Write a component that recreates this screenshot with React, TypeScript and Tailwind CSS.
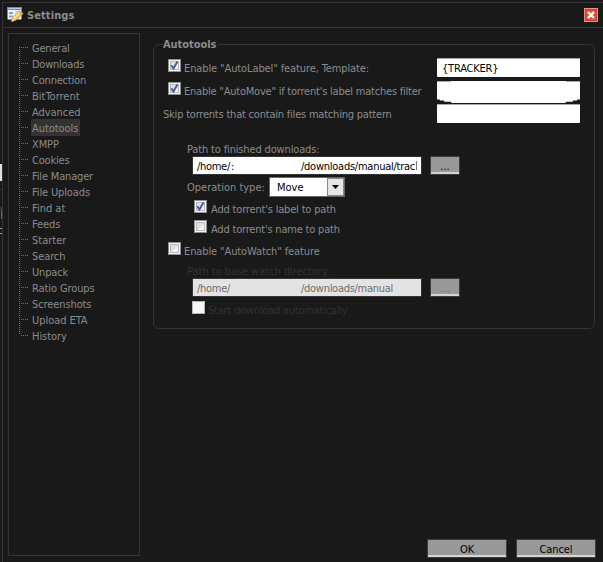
import type { ReactNode } from "react";

const SECTIONS: [string, string][] = [
  ["General", "tracking-[-0.2px]"],
  ["Downloads", "tracking-[-0.25px]"],
  ["Connection", "tracking-[-0.2px]"],
  ["BitTorrent", ""],
  ["Advanced", "tracking-[-0.05px]"],
  ["Autotools", "tracking-[-0.05px]"],
  ["XMPP", "tracking-[-0.1px]"],
  ["Cookies", "tracking-[-0.2px]"],
  ["File Manager", "tracking-[-0.17px]"],
  ["File Uploads", "tracking-[-0.13px]"],
  ["Find at", ""],
  ["Feeds", "tracking-[-0.1px]"],
  ["Starter", ""],
  ["Search", "tracking-[-0.1px]"],
  ["Unpack", "tracking-[-0.15px]"],
  ["Ratio Groups", "tracking-[-0.1px]"],
  ["Screenshots", "tracking-[-0.1px]"],
  ["Upload ETA", "tracking-[-0.05px]"],
  ["History", "tracking-[-0.05px]"],
];

function SettingsIcon() {
  return (
    <svg width="17" height="16" viewBox="0 0 17 16">
      <rect x="0.5" y="0.5" width="14" height="12" rx="1" fill="#eef4fc" stroke="#5b87cf" />
      <rect x="0" y="0" width="15" height="3" fill="#5c8fe0" />
      <rect x="1" y="1" width="13" height="1" fill="#a9c8f5" />
      <path d="M2 5h4v2H2zM2 8.5h4v2H2z" fill="#7f9fce" />
      <path d="M8 5h5M8 7h4M8 9h2" stroke="#a8bddf" />
      <path d="M4.5 14.5l1-3.5L12 4.6l3.3 2.8L8.5 13.5z" fill="#f3c64d" stroke="#b98425" strokeWidth=".7" />
      <path d="M6.5 11.5l6-5.7" stroke="#fff0a8" strokeWidth="1.2" />
      <path d="M12 4.6l1.3-1 3.2 2.8-1.2 1z" fill="#e89a5e" />
      <path d="M4.5 14.5l.8-2.6 2.4 1.7z" fill="#f7e2b4" />
    </svg>
  );
}

function CloseIcon() {
  return (
    <svg width="14" height="14" viewBox="0 0 14 14">
      <rect x="0.5" y="0.5" width="13" height="13" fill="#dc503e" stroke="#ef8d7c" />
      <rect x="1.5" y="1.5" width="11" height="11" fill="none" stroke="#c93c2e" />
      <path d="M4 4l6 6M10 4l-6 6" stroke="#fff" strokeWidth="2.3" />
    </svg>
  );
}

function Check({ on = false, disabled = false }: { on?: boolean; disabled?: boolean }) {
  return (
    <svg className="block shrink-0" width="13" height="13" viewBox="0 0 13 13">
      <rect x="0.5" y="0.5" width="12" height="12" fill="#f6f6f6" stroke={disabled ? "#b4b4b4" : "#8f8f8f"} />
      {!disabled && <rect x="2.5" y="2.5" width="8" height="8" fill="#dfe0e3" stroke="#b5b9be" />}
      {!disabled && <path d="M4 10l6-6v6z" fill="#f3f3f4" />}
      {on && <path d="M3.2 6.2l2.3 3.3 4-7" fill="none" stroke="#475a9c" strokeWidth="1.9" />}
    </svg>
  );
}

function Button({ children, className }: { children: ReactNode; className: string }) {
  return (
    <button
      className={`box-border flex h-[19px] shrink-0 items-center justify-center border border-[#3c3c3c] bg-[#999] pt-[2px] shadow-[inset_0_-2px_0_#d4d4d4] ${className}`}
    >
      {children}
    </button>
  );
}

function Field({ children, className = "" }: { children?: ReactNode; className?: string }) {
  return (
    <div className={`flex w-[143px] items-center rounded-[1px] border-t border-[#aaa] bg-white pl-[5px] text-black ${className}`}>
      {children}
    </div>
  );
}

export default function App() {
  return (
    <div className="relative flex h-[562px] w-[603px] overflow-hidden bg-[#191919] font-['DejaVu_Sans_Condensed','DejaVu_Sans',sans-serif] text-[11px] leading-[16px] whitespace-nowrap text-[#8c8c8c] [font-stretch:condensed]">
      <div className="flex w-[2px] shrink-0 flex-col pt-[164px]">
        <div className="h-[17px] bg-[#e0e0e0]" />
        <div className="mt-[8px] h-px bg-[#333]" />
        <div className="mt-[17px] h-[3px] bg-[#333]" />
        <div className="h-[9px] w-px self-end bg-[#666]" />
        <div className="mt-[9px] h-px bg-[#999]" />
        <div className="mt-[4px] h-px bg-[#999]" />
      </div>
      <div className="mt-[2px] flex min-w-0 flex-1 flex-col border-t border-l border-[#343434]">
        <header className="flex h-[25px] shrink-0 items-center border-b border-[#343434] pr-[5px] pl-[4px]">
          <SettingsIcon />
          <h1 className="ml-[3px] flex-1 pt-[2px] font-bold tracking-[0.1px]">Settings</h1>
          <CloseIcon />
        </header>
        <div className="flex flex-1">
          <nav className="mt-[5px] ml-[5px] h-[523px] w-[132px] shrink-0 border border-[#343434] pt-[5px] pl-[10px]">
            {SECTIONS.map(([name, tracking], i) => (
              <div key={name} className="flex h-[16px] items-start">
                <div
                  className={`flex w-px shrink-0 self-stretch bg-[repeating-linear-gradient(to_bottom,#777_0_1px,transparent_1px_2px)] ${
                    i === 0 ? "mt-[8px]" : i === SECTIONS.length - 1 ? "mb-[8px]" : ""
                  }`}
                />
                <div className="mt-[8px] ml-px h-px w-[8px] shrink-0 bg-[repeating-linear-gradient(to_right,#777_0_1px,transparent_1px_2px)]" />
                <span className={`ml-[2px] h-[17px] pt-[2px] pr-[2px] pl-px leading-[15px] ${tracking} ${name === "Autotools" ? "bg-[#333]" : ""}`}>
                  {name}
                </span>
              </div>
            ))}
          </nav>
          <div className="ml-[13px] flex w-[443px] flex-col pt-[8px]">
            <fieldset className="h-[293px] w-[442px] rounded-[6px] border border-[#343434] pl-[9px]">
              <legend className="h-[16px] pt-px font-bold">
                <span className="pr-[2px] tracking-[-0.05px]">Autotools</span>
              </legend>
              <div className="flex flex-col">
                <div className="mt-[6px] flex h-[19px]">
                  <div className="flex w-[274px] gap-[3px] pt-px pl-[5px]">
                    <Check on />
                    <span className="pt-[2px] tracking-[-0.11px]">Enable "AutoLabel" feature, Template:</span>
                  </div>
                  <Field className="pt-px tracking-[-0.2px]">{"{TRACKER}"}</Field>
                </div>
                <div className="mt-[4px] flex h-[22px]">
                  <div className="flex w-[274px] gap-[3px] pt-px pl-[5px]">
                    <Check on />
                    <span className="pt-[2px] tracking-[-0.22px]">Enable "AutoMove" if torrent's label matches filter</span>
                  </div>
                  <Field className="justify-between border-t-0 !items-start !pl-0 [clip-path:polygon(0_0,100%_0,100%_84%,98%_84%,98%_89%,95%_89%,95%_94%,90%_94%,90%_100%,10%_100%,10%_94%,5%_94%,5%_89%,2%_89%,2%_84%,0_84%)]">
                    <div className="h-px w-[14px] bg-[#aaa]" />
                    <div className="h-px w-[14px] bg-[#aaa]" />
                  </Field>
                </div>
                <div className="mt-px flex h-[19px]">
                  <span className="w-[274px] pt-[3px] tracking-[-0.21px]">Skip torrents that contain files matching pattern</span>
                  <Field />
                </div>
                <div className="mt-[17px] h-[16px] pt-[2px] pl-[24px] tracking-[-0.15px]">Path to finished downloads:</div>
                <div className="flex h-[19px] pl-[29px]">
                  <div className="mr-[8px] flex w-[230px] items-center border border-[#333] bg-white pt-[2px] pl-[4px] tracking-[-0.25px] text-black">
                    <span className="w-[34px] tracking-[-0.3px]">/home/</span>
                    <span className="w-[70px]">:</span>
                    <span>/downloads/manual/trac</span>
                    <i className="mb-[2px] ml-px h-[9px] w-px bg-[#777]" />
                  </div>
                  <Button className="w-[30px] text-black">...</Button>
                </div>
                <div className="mt-[2px] flex h-[20px] pl-[24px]">
                  <span className="w-[82px] pt-[3px]">Operation type:</span>
                  <div className="flex w-[76px] border border-[#666] bg-white text-black">
                    <span className="flex-1 pt-[2px] pl-[7px]">Move</span>
                    <div className="flex w-[17px] items-center justify-center border border-[#888] bg-[#e6e6e6]">
                      <svg width="7" height="4">
                        <path d="M0 0h7L3.5 4z" />
                      </svg>
                    </div>
                  </div>
                </div>
                <div className="mt-[3px] flex h-[20px] gap-[4px] pl-[31px]">
                  <Check on />
                  <span className="pt-[2px] tracking-[-0.18px]">Add torrent's label to path</span>
                </div>
                <div className="flex h-[22px] gap-[4px] pl-[31px]">
                  <Check />
                  <span className="pt-[2px] tracking-[-0.2px]">Add torrent's name to path</span>
                </div>
                <div className="flex h-[21px] gap-[3px] pl-[5px]">
                  <Check />
                  <span className="pt-[2px] tracking-[-0.11px]">Enable "AutoWatch" feature</span>
                </div>
                <div className="h-[15px] pt-px pl-[24px] tracking-[-0.04px] text-[#333]">Path to base watch directory:</div>
                <div className="flex h-[19px] pl-[29px]">
                  <div className="mr-[8px] flex w-[230px] items-center border border-[#333] bg-[#e3e3e3] pt-[2px] pl-[4px] tracking-[-0.28px] text-[#6d6d6d]">
                    <span className="w-[104px]">/home/</span>
                    <span>/downloads/manual</span>
                  </div>
                  <Button className="w-[30px] text-[#666]">...</Button>
                </div>
                <div className="mt-[4px] flex h-[16px] gap-[3px] pl-[29px] text-[#333]">
                  <Check disabled />
                  <span className="pt-[2px] tracking-[-0.23px]">Start download automatically</span>
                </div>
              </div>
            </fieldset>
            <footer className="mt-auto mb-[4px] flex justify-end gap-[9px]">
              <Button className="w-[80px] tracking-[-0.1px] text-black">OK</Button>
              <Button className="w-[80px] tracking-[-0.1px] text-black">Cancel</Button>
            </footer>
          </div>
        </div>
      </div>
    </div>
  );
}
